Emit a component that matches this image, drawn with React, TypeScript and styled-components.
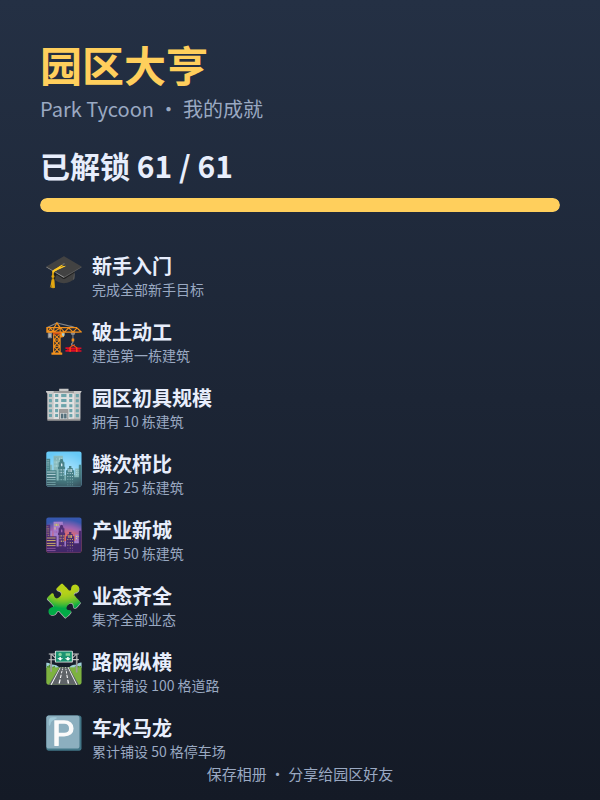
import React from "react";
import styled, { createGlobalStyle } from "styled-components";

const GlobalStyle = createGlobalStyle`
  *, *::before, *::after {
    box-sizing: border-box;
  }
  body {
    margin: 0;
    background: #141a26;
    font-family: "Noto Sans CJK SC", "Noto Color Emoji", sans-serif;
  }
`;

const Page = styled.main`
  display: flex;
  flex-direction: column;
  min-height: 100vh;
  padding: 34px 40px 16px;
  background: linear-gradient(#243044, #141a26);
  color: #e8eefc;
`;

const Title = styled.h1`
  margin: 0;
  font-size: 42px;
  line-height: 60px;
  font-weight: 700;
  color: #ffcf5c;
`;

const Subtitle = styled.p`
  margin: 0;
  font-size: 20px;
  line-height: 30px;
  color: #9aa9c2;
`;

const Summary = styled.section`
  display: flex;
  flex-direction: column;
  gap: 13px;
  margin-top: 21px;
`;

const Count = styled.h2`
  margin: 0;
  font-size: 30px;
  line-height: 40px;
  font-weight: 700;
`;

const ProgressTrack = styled.div`
  height: 14px;
  border-radius: 7px;
  background: #334158;
  overflow: hidden;
`;

const ProgressFill = styled.div`
  height: 100%;
  border-radius: 7px;
  background: #ffcf5c;
`;

const AchievementList = styled.ul`
  display: flex;
  flex-direction: column;
  gap: 18px;
  margin: 40px 0 0;
  padding: 0;
  list-style: none;
`;

const Achievement = styled.li`
  display: flex;
  align-items: flex-start;
  height: 48px;
`;

const Icon = styled.span`
  flex: none;
  width: 52px;
  padding-left: 4px;
  font-size: 32px;
  line-height: 32px;
`;

const Name = styled.h3`
  margin: 0;
  font-size: 20px;
  line-height: 28px;
  font-weight: 700;
`;

const Description = styled.p`
  margin: 0;
  font-size: 14px;
  line-height: 18px;
  color: #9aa9c2;
`;

const Footer = styled.footer`
  margin-top: auto;
  font-size: 15px;
  line-height: 20px;
  text-align: center;
  color: #9aa9c2;
`;

const achievements = [
  { icon: "🎓", name: "新手入门", description: "完成全部新手目标" },
  { icon: "🏗️", name: "破土动工", description: "建造第一栋建筑" },
  { icon: "🏢", name: "园区初具规模", description: "拥有 10 栋建筑" },
  { icon: "🏙️", name: "鳞次栉比", description: "拥有 25 栋建筑" },
  { icon: "🌆", name: "产业新城", description: "拥有 50 栋建筑" },
  { icon: "🧩", name: "业态齐全", description: "集齐全部业态" },
  { icon: "🛣️", name: "路网纵横", description: "累计铺设 100 格道路" },
  { icon: "🅿️", name: "车水马龙", description: "累计铺设 50 格停车场" },
];

const unlocked = 61;
const total = 61;

export default function App() {
  return (
    <>
      <GlobalStyle />
      <Page lang="zh-CN">
        <header>
          <Title>园区大亨</Title>
          <Subtitle>Park Tycoon · 我的成就</Subtitle>
        </header>
        <Summary>
          <Count id="unlocked-count">
            已解锁 {unlocked} / {total}
          </Count>
          <ProgressTrack
            role="progressbar"
            aria-labelledby="unlocked-count"
            aria-valuemin={0}
            aria-valuemax={total}
            aria-valuenow={unlocked}
          >
            <ProgressFill style={{ width: `${(unlocked / total) * 100}%` }} />
          </ProgressTrack>
        </Summary>
        <AchievementList>
          {achievements.map((item) => (
            <Achievement key={item.name}>
              <Icon aria-hidden="true">{item.icon}</Icon>
              <div>
                <Name>{item.name}</Name>
                <Description>{item.description}</Description>
              </div>
            </Achievement>
          ))}
        </AchievementList>
        <Footer>保存相册 · 分享给园区好友</Footer>
      </Page>
    </>
  );
}
